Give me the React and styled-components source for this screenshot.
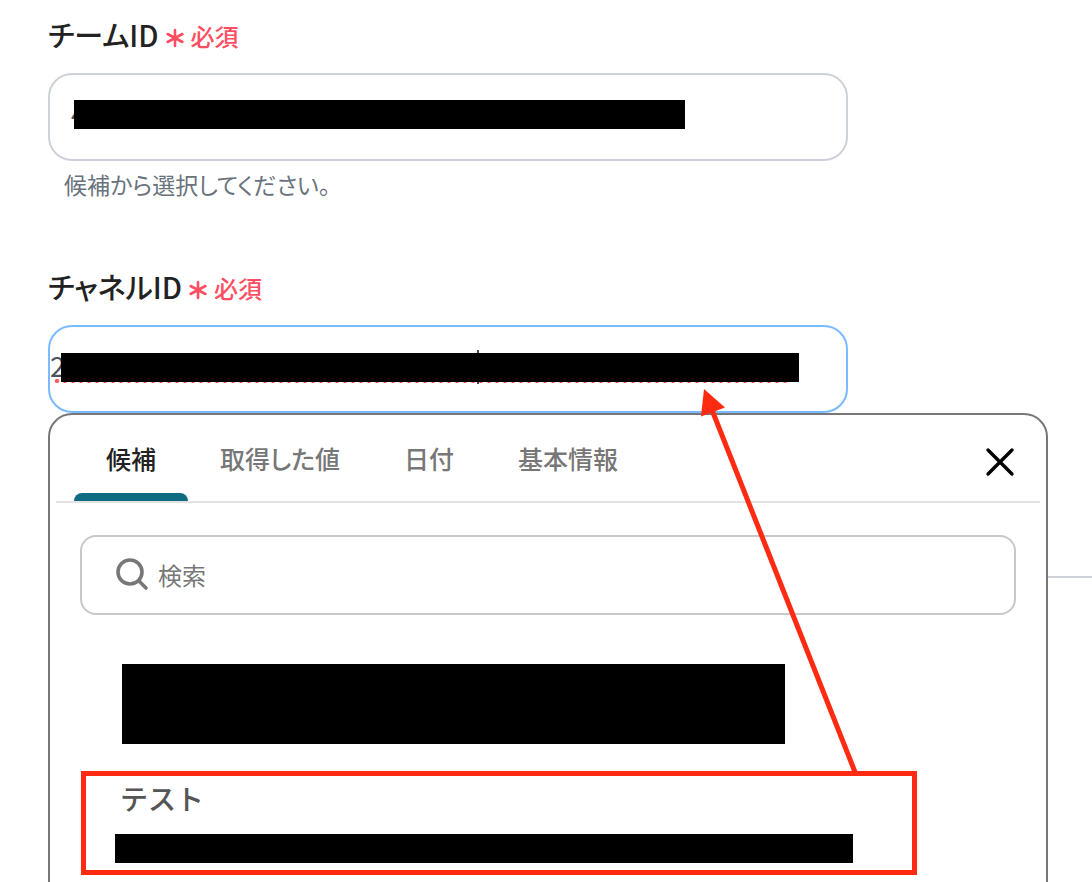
import React, { useState } from "react";
import styled, { createGlobalStyle } from "styled-components";

const GlobalStyle = createGlobalStyle`
  *, *::before, *::after {
    box-sizing: border-box;
  }
  body {
    margin: 0;
    background: #fff;
    color: #222;
    font-family: "Noto Sans CJK JP", "Noto Sans", sans-serif;
    font-feature-settings: "palt";
  }
  button, input {
    font: inherit;
    font-feature-settings: inherit;
  }
`;

const Page = styled.main`
  min-height: 100vh;
  padding-top: 14px;
  overflow: hidden;
`;

const Field = styled.div`
  position: relative;
  margin: 0 44px 0 48px;
`;

const LabelRow = styled.div`
  display: flex;
  align-items: center;
  gap: 6px;
  height: 40px;
  margin-bottom: 19px;
  line-height: 40px;
`;

const Label = styled.label`
  font-size: 29px;
  font-weight: 500;
`;

const Required = styled.span`
  display: flex;
  align-items: center;
  gap: 6px;
  padding-top: 4px;
  line-height: 36px;
  color: #ff4d61;
  font-size: 24px;
  font-weight: 500;

  svg {
    margin-top: 4px;
  }
`;

const InputBox = styled.div`
  position: relative;
  max-width: 800px;
`;

const TextInput = styled.input`
  display: block;
  width: 100%;
  height: 88px;
  padding: 0 ${props => (props.$active ? "0" : "21px")} 8px;
  border: 2px solid ${props => (props.$active ? "#7cbaff" : "#cdd2da")};
  border-radius: 24px;
  outline: none;
  background: #fff;
  color: #4b535c;
  font-size: 28px;
`;

const Mask = styled.div`
  width: ${props => props.$width}px;
  max-width: 100%;
  height: ${props => props.$height || 29}px;
  background: #000;
`;

const InputMask = styled(Mask)`
  position: absolute;
  top: ${props => props.$top}px;
  left: ${props => props.$left}px;
`;

const SpellMark = styled.span`
  position: absolute;
  top: 54px;
  left: 5px;
  width: 736px;
  height: 4px;
  background: radial-gradient(circle, #ff5f5c 40%, transparent 60%) 0 0 / 8px 4px;
`;

const Caret = styled.span`
  position: absolute;
  top: 25px;
  left: 429px;
  width: 2px;
  height: 34px;
  background: #3f4a56;
`;

const HelpText = styled.p`
  margin: 6px 16px 65px;
  line-height: 34px;
  color: #69737e;
  font-size: 23px;
`;

const Popup = styled.section`
  position: absolute;
  top: 100%;
  left: 0;
  z-index: 1;
  width: 100%;
  max-width: 1000px;
  min-height: 520px;
  border: 2px solid #777;
  border-radius: 24px;
  background: #fff;
`;

const TabBar = styled.div`
  display: flex;
  align-items: stretch;
  height: 88px;
  margin: 0 6px;
  padding: 0 22px 0 18px;
  border-bottom: 2px solid #e3e3e3;
`;

const Tab = styled.button`
  position: relative;
  padding: 0 32px;
  border: 0;
  background: none;
  color: ${props => (props.$active ? "#222" : "#777")};
  font-size: 25px;
  font-weight: 500;
  cursor: pointer;

  &::after {
    content: "";
    position: absolute;
    right: 0;
    bottom: 0;
    left: 0;
    height: 8px;
    border-radius: 8px 8px 0 0;
    background: ${props => (props.$active ? "#0f6b81" : "transparent")};
  }
`;

const CloseButton = styled.button`
  display: flex;
  align-items: center;
  margin-left: auto;
  padding: 8px 0 0;
  border: 0;
  background: none;
  color: #000;
  cursor: pointer;
`;

const SearchBox = styled.label`
  display: flex;
  align-items: center;
  gap: 8px;
  height: 80px;
  margin: 32px 30px 49px;
  padding: 0 34px;
  border: 2px solid #c8c8c8;
  border-radius: 16px;
  color: #777;

  svg {
    margin-bottom: 2px;
  }
`;

const SearchInput = styled.input`
  flex: 1;
  min-width: 0;
  padding: 0 0 2px;
  border: 0;
  outline: none;
  background: none;
  font-size: 24px;

  &::placeholder {
    color: #777;
    opacity: 1;
  }
`;

const Options = styled.ul`
  display: flex;
  flex-direction: column;
  gap: 30px;
  margin: 0;
  padding: 0 65px;
  list-style: none;
`;

const Option = styled.li`
  padding-left: ${props => (props.$padded ? "7px" : "0")};
`;

const OptionName = styled.div`
  margin-bottom: 12px;
  padding-left: 5px;
  line-height: 48px;
  color: #555;
  font-size: 28px;
  font-weight: 500;
  font-feature-settings: normal;
`;

const Highlight = styled.div`
  position: absolute;
  top: 356px;
  left: 31px;
  width: 836px;
  height: 104px;
  border: 5px solid #ff2a12;
  pointer-events: none;
`;

const Arrow = styled.svg`
  position: absolute;
  top: -27px;
  left: 650px;
  pointer-events: none;
`;

const Divider = styled.hr`
  margin: 163px 0 0 48px;
  border: 0;
  border-top: 2px solid #cdd2da;
`;

const tabs = ["候補", "取得した値", "日付", "基本情報"];

const RequiredMark = () => (
  <Required>
    <svg width="20" height="20" viewBox="0 0 20 20" fill="none" stroke="currentColor" strokeWidth="2.6" strokeLinecap="round" aria-hidden="true">
      <path d="M10 2v16M2.6 6l14.8 8M17.4 6L2.6 14" />
    </svg>
    必須
  </Required>
);

const SearchIcon = () => (
  <svg width="34" height="34" viewBox="0 0 34 34" fill="none" stroke="currentColor" strokeWidth="3.6" strokeLinecap="round" aria-hidden="true">
    <circle cx="14" cy="15" r="12" />
    <path d="M23 24l7 7" />
  </svg>
);

const CandidatePopup = () => {
  const [active, setActive] = useState(tabs[0]);

  return (
    <Popup>
      <TabBar role="tablist">
        {tabs.map(tab => (
          <Tab
            key={tab}
            type="button"
            role="tab"
            aria-selected={tab === active}
            $active={tab === active}
            onClick={() => setActive(tab)}
          >
            {tab}
          </Tab>
        ))}
        <CloseButton type="button" aria-label="閉じる">
          <svg width="36" height="36" viewBox="0 0 36 36" fill="none" stroke="currentColor" strokeWidth="3.4" strokeLinecap="round">
            <path d="M6 6l24 24M30 6L6 30" />
          </svg>
        </CloseButton>
      </TabBar>
      <SearchBox>
        <SearchIcon />
        <SearchInput type="text" placeholder="検索" aria-label="検索" />
      </SearchBox>
      <Options>
        <Option $padded>
          <Mask $width={663} $height={80} />
        </Option>
        <Option>
          <OptionName>テスト</OptionName>
          <Mask $width={738} />
        </Option>
      </Options>
      <Highlight />
      <Arrow width="160" height="386" viewBox="0 0 160 386" aria-hidden="true">
        <path d="M12 22L155 384" stroke="#ff2a12" strokeWidth="5" />
        <path d="M4 1L25 19.5L1 28.5Z" fill="#ff2a12" />
      </Arrow>
    </Popup>
  );
};

const App = () => (
  <>
    <GlobalStyle />
    <Page>
      <Field>
        <LabelRow>
          <Label htmlFor="team-id">チームID</Label>
          <RequiredMark />
        </LabelRow>
        <InputBox>
          <TextInput id="team-id" type="text" defaultValue="4" />
          <InputMask $top={27} $left={26} $width={611} />
        </InputBox>
        <HelpText>候補から選択してください。</HelpText>
      </Field>
      <Field>
        <LabelRow>
          <Label htmlFor="channel-id">チャネルID</Label>
          <RequiredMark />
        </LabelRow>
        <InputBox>
          <TextInput id="channel-id" type="text" defaultValue="2" $active />
          <SpellMark />
          <Caret />
          <InputMask $top={28} $left={13} $width={738} />
        </InputBox>
        <CandidatePopup />
      </Field>
      <Divider />
    </Page>
  </>
);

export default App;
